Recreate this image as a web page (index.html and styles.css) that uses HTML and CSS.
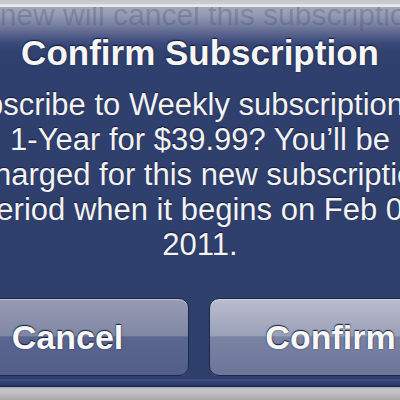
FILE: index.html
```html
<!DOCTYPE html>
<html lang="en">
<head>
<meta charset="utf-8">
<title>Confirm Subscription</title>
<link rel="stylesheet" href="styles.css">
</head>
<body>
<div class="page">
  <div class="edge-top"></div>
  <div class="alert">
    <div class="ghost"><span class="ghost-text">renew will cancel this subscription.</span></div>
    <h1 class="title">Confirm Subscription</h1>
    <div class="msg">
      <div class="line line-1">Subscribe to Weekly subscription</div>
      <div class="line">1-Year for $39.99? You’ll be</div>
      <div class="line line-3">charged for this new subscription</div>
      <div class="line line-4">period when it begins on Feb 01,</div>
      <div class="line">2011.</div>
    </div>
    <div class="buttons">
      <button class="btn btn-cancel">Cancel</button>
      <button class="btn btn-confirm">Confirm</button>
    </div>
    <div class="alert-foot"></div>
  </div>
  <div class="edge-bottom"></div>
</div>
</body>
</html>
```
FILE: styles.css
```css
* { box-sizing: border-box; }
html, body { margin: 0; padding: 0; }
body {
  width: 400px;
  height: 400px;
  overflow: hidden;
  background: #30406e;
  font-family: "Liberation Sans", Arial, Helvetica, sans-serif;
}
.page {
  width: 400px;
  height: 400px;
  overflow: hidden;
  display: flex;
  flex-direction: column;
}
.edge-top {
  height: 7px;
  flex: none;
  background: linear-gradient(to bottom, #c6c6c8 0, #cdcdcf 4px, #eeeef0 5px, #e4e5ea 7px);
}
.alert {
  flex: 1;
  display: flex;
  flex-direction: column;
  background: linear-gradient(to bottom,
    #a2a7bc 0px,
    #959bb2 8px,
    #7880a0 18px,
    #55608b 28px,
    #3b4a7b 36px,
    #32426f 44px,
    #30406e 60px,
    #2f3f6c 100%);
}
.ghost {
  height: 24px;
  overflow: hidden;
  flex: none;
}
.ghost-text {
  display: block;
  margin-top: -7px;
  margin-left: -27px;
  white-space: nowrap;
  font-size: 30px;
  line-height: 30px;
  color: rgba(70, 80, 118, 0.32);
}
.title {
  margin: 2px 0 0;
  font-size: 35px;
  line-height: 40px;
  font-weight: bold;
  text-align: center;
  color: #f6f6f6;
  text-shadow: 0 -1px 1px rgba(10, 18, 45, 0.85), 0 0 2px rgba(10, 18, 45, 0.5);
  white-space: nowrap;
}
.msg {
  margin: 14px -100px 0;
  text-align: center;
  font-size: 31px;
  line-height: 35px;
  color: #f3f3f3;
  text-shadow: 0 -1px 1px rgba(10, 18, 45, 0.8);
}
.line { white-space: nowrap; }
.line-1 { margin-right: 48px; }
.line-3 { margin-left: 10px; }
.line-4 { margin-left: 8px; }
.buttons {
  margin: 36px -52px 0 -54px;
  display: flex;
  gap: 20px;
  flex: none;
}
.btn {
  flex: 1;
  height: 78px;
  border: 1px solid #1b264c;
  border-radius: 10px;
  font-family: "Liberation Sans", Arial, Helvetica, sans-serif;
  font-size: 34px;
  font-weight: bold;
  color: #f8f8f8;
  text-shadow: 0 -1px 1px rgba(10, 18, 45, 0.9), 0 0 2px rgba(10, 18, 45, 0.5);
  padding: 0;
  box-shadow: inset 0 1px 0 rgba(220, 224, 236, 0.55), 0 1px 0 rgba(120, 132, 170, 0.35);
}
.btn-cancel {
  background: linear-gradient(to bottom,
    #969cb4 0%, #8188a4 48%, #5b6690 50%, #525d88 100%);
}
.btn-confirm {
  background: linear-gradient(to bottom,
    #b9bdcd 0%, #9ba1b8 48%, #7a83a4 50%, #6d7699 100%);
}
.alert-foot {
  flex: 1;
  background: linear-gradient(to bottom,
    #2f3e6b 0, #2f3e6b 3px, #4a5886 4px, #34437a 5px, #2d3c6a 9px, #1e2a50 10px);
}
.edge-bottom {
  height: 13px;
  flex: none;
  background: linear-gradient(to bottom, #9c9ea6 0, #c8c8ca 2px, #bdbdbf 7px, #a9a9ab 13px);
}
```
